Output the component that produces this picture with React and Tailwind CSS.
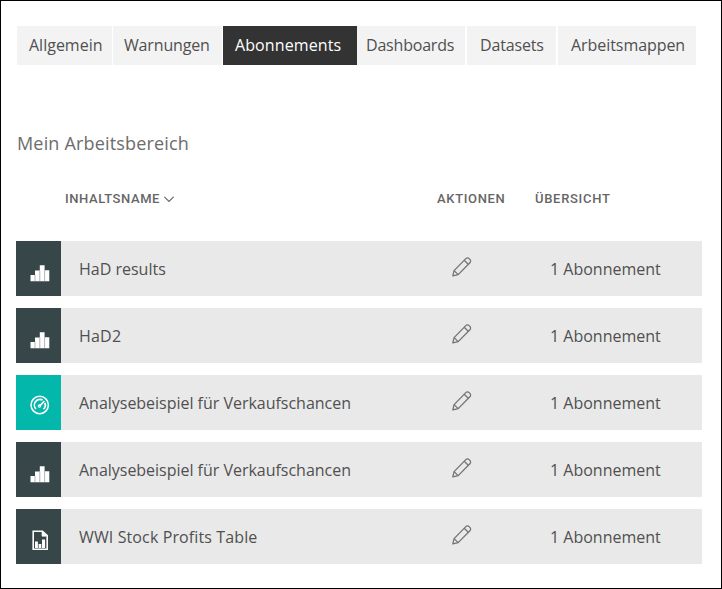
const tabs = [
  { label: "Allgemein", box: "ml-[17px] w-[95px] pl-3", text: "tracking-[0px]" },
  { label: "Warnungen", box: "ml-px w-[109px] pl-[11px]", text: "tracking-[-0.15px]" },
  { label: "Abonnements", box: "ml-px w-[134px] pl-3", text: "tracking-[0.1px]", active: true },
  { label: "Dashboards", box: "w-[108px] pl-[9px]", text: "tracking-[-0.2px]" },
  { label: "Datasets", box: "ml-[2px] w-[89px] pl-[13px]", text: "tracking-[-0.15px]" },
  { label: "Arbeitsmappen", box: "ml-[2px] w-[138px] pl-[13px]", text: "tracking-[-0.06px]" },
];

const rows = [
  { name: "HaD results", kind: "report", text: "tracking-[0px]" },
  { name: "HaD2", kind: "report", text: "tracking-[0.2px]" },
  { name: "Analysebeispiel für Verkaufschancen", kind: "dashboard", text: "tracking-[-0.02px]" },
  { name: "Analysebeispiel für Verkaufschancen", kind: "report", text: "tracking-[-0.02px]" },
  { name: "WWI Stock Profits Table", kind: "workbook", text: "tracking-[0.12px]" },
];

function ReportIcon() {
  return (
    <svg className="h-5 w-5" viewBox="0 0 20 20">
      <path d="M0.5 11h4.5v6.2H0.5zM5 6.5h4.8v10.7H5zM9.8 1.2h4.8v16H9.8zM14.6 6.2h4.7v11h-4.7z" fill="#fff" />
      <path d="M5 11v6.2M9.8 6.5v10.7M14.6 6.2v11" stroke="#8b9698" strokeWidth="0.7" />
    </svg>
  );
}

function DashboardIcon() {
  return (
    <svg className="h-5 w-5" viewBox="0 0 20 20" fill="none" stroke="#fff">
      <circle cx="9.7" cy="10" r="8.7" strokeWidth="1.5" />
      <path d="M6 14A5.6 5.6 0 0 1 12.6 5.1M14.8 7.8a5.6 5.6 0 0 1-1.4 6.4" strokeWidth="1.7" />
      <path d="M9.6 11.2 14.4 6" strokeWidth="1.7" />
      <circle cx="9.4" cy="11" r="1.1" strokeWidth="1.2" />
    </svg>
  );
}

function WorkbookIcon() {
  return (
    <svg className="h-5 w-5" viewBox="0 0 20 20" fill="none" stroke="#fff">
      <path d="M3.2 1.2h9.3l4.7 4.5v13.6h-14z" strokeWidth="1.6" />
      <path d="M12 1.4v4.8h4.8z" fill="#fff" strokeWidth="0.6" />
      <path d="M5 11.4h2.9V18H5zM8.6 14h2.7v4H8.6zM12 9.4h3.1V18H12z" fill="#fff" stroke="none" />
    </svg>
  );
}

function PencilIcon() {
  return (
    <svg className="h-5 w-5" viewBox="0 0 20 20" fill="none" stroke="#747474" strokeWidth="1.3" strokeLinejoin="round">
      <path d="M0.8 18.9 2.1 13.6 13.8 1.6a2.3 2.3 0 0 1 3.3 0l0.8 0.8a2.3 2.3 0 0 1 0 3.3L6.2 17.6z" />
      <path d="M12.2 3.2 16.3 7.3M2.1 13.6l4.1 4" />
    </svg>
  );
}

const icons = {
  report: { Icon: ReportIcon, tile: "bg-[#374649] pt-2.5" },
  dashboard: { Icon: DashboardIcon, tile: "bg-[#03b8aa] pt-1" },
  workbook: { Icon: WorkbookIcon, tile: "bg-[#374649] pt-1.5" },
};

function Row({ name, kind, text }) {
  const { Icon, tile } = icons[kind];
  return (
    <div className="flex h-[55px] items-center bg-[#e9e9e9] text-[16px] leading-6 text-[#505050]">
      <div className={`flex h-full w-[45px] items-center justify-center pl-[3px] ${tile}`}>
        <Icon />
      </div>
      <div className="w-[391px] pl-[18px] whitespace-nowrap"><span className={text}>{name}</span></div>
      <div className="w-[98px] pb-1"><PencilIcon /></div>
      <div className="whitespace-nowrap"><span>1 Abonnement</span></div>
    </div>
  );
}

export default function App() {
  return (
    <div className="h-[589px] w-[722px] overflow-hidden border border-black bg-white font-['Open_Sans',sans-serif]">
      <nav className="-ml-px flex pt-[25px]">
        {tabs.map((t) => (
          <div key={t.label} className={`h-[38.5px] shrink-0 pt-[7px] text-[16px] leading-6 whitespace-nowrap ${t.box} ${t.active ? "bg-[#333] text-white" : "bg-[#f3f3f3] text-[#505050]"}`}>
            <span className={t.text}>{t.label}</span>
          </div>
        ))}
      </nav>
      <h1 className="mt-[66.5px] pl-4 text-[18px] leading-6 text-[#6c6c6c]"><span className="tracking-[0.17px]">Mein Arbeitsbereich</span></h1>
      <div className="mt-[34px] flex h-5 items-center pl-16 font-['Roboto',sans-serif] text-[13px] font-medium text-[#666]">
        <div className="flex w-[372px] items-center gap-[3.5px]">
          <span className="tracking-[0.58px]">INHALTSNAME</span>
          <svg className="h-2.5 w-2.5" viewBox="0 0 10 10" fill="none" stroke="#666" strokeWidth="1.2"><path d="M0.3 2.8 5 7.5 9.7 2.8" /></svg>
        </div>
        <div className="w-[98px]"><span className="tracking-[0.65px]">AKTIONEN</span></div>
        <div><span className="tracking-[0.7px]">ÜBERSICHT</span></div>
      </div>
      <main className="mt-[32px] ml-[15px] flex w-[686px] flex-col gap-3">
        {rows.map((r, i) => <Row key={i} {...r} />)}
      </main>
    </div>
  );
}
